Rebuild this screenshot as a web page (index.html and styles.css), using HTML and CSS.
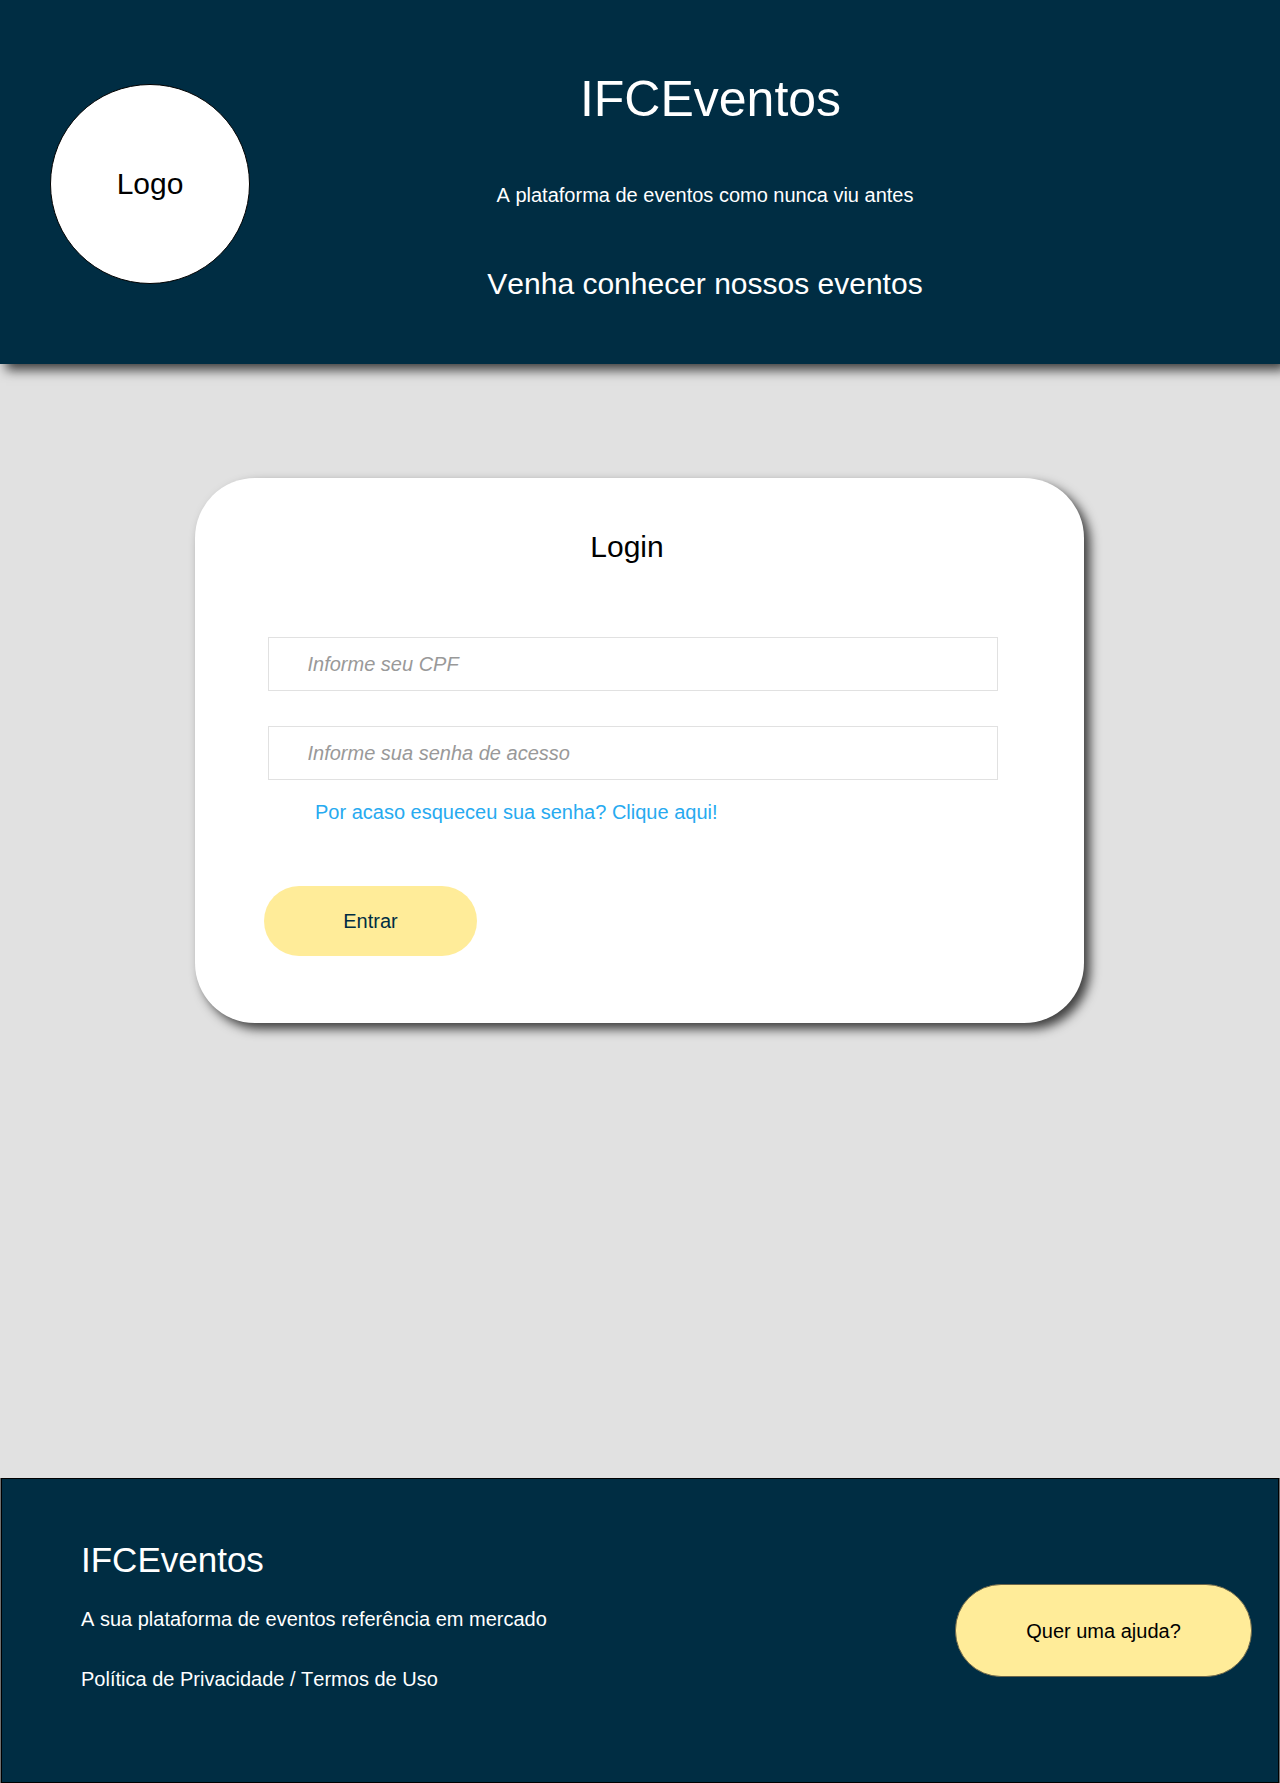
FILE: index.html
```html
<!DOCTYPE html>
<html lang="pt-BR">
<head>
  <meta charset="utf-8">
  <title>IFCEventos - Login</title>
  <link rel="stylesheet" href="styles.css">
</head>
<body>
  <header class="header">
    <div class="logo">Logo</div>
    <div class="intro">
      <h1 class="title">IFCEventos</h1>
      <p class="tagline">A plataforma de eventos como nunca viu antes</p>
      <p class="invite">Venha conhecer nossos eventos</p>
    </div>
  </header>
  <main class="main">
    <form class="card">
      <h2 class="card-title">Login</h2>
      <input class="field" type="text" placeholder="Informe seu CPF">
      <input class="field" type="text" placeholder="Informe sua senha de acesso">
      <a class="forgot" href="#">Por acaso esqueceu sua senha? Clique aqui!</a>
      <button class="submit" type="button">Entrar</button>
    </form>
  </main>
  <footer class="footer">
    <div class="about">
      <h2 class="brand">IFCEventos</h2>
      <p class="slogan">A sua plataforma de eventos referência em mercado</p>
      <p class="legal">Política de Privacidade / Termos de Uso</p>
    </div>
    <button class="help" type="button">Quer uma ajuda?</button>
  </footer>
</body>
</html>
```

FILE: styles.css
```css
* {
  box-sizing: border-box;
  margin: 0;
}

body {
  display: flex;
  flex-direction: column;
  min-height: 1783px;
  background: #e1e1e1;
  font: 20px/22px "Liberation Sans", Arial, sans-serif;
  font-kerning: none;
  color: #000;
  overflow-x: hidden;
}

h1,
h2 {
  font-weight: 400;
}

.header {
  display: flex;
  height: 364px;
  padding: 71px 0 0 50px;
  background: #002d43;
  box-shadow: 6px 6px 11px rgba(0, 0, 0, 0.73);
  color: #fff;
}

.logo {
  display: flex;
  align-items: center;
  justify-content: center;
  width: 200px;
  height: 200px;
  margin-top: 13px;
  padding-bottom: 2px;
  border: 1px solid #000;
  border-radius: 50%;
  background: #fff;
  color: #000;
  font-size: 30px;
  line-height: 33px;
}

.intro {
  width: 436px;
  margin-left: 237px;
  text-align: center;
  white-space: nowrap;
}

.title {
  padding-left: 11px;
  font-size: 50px;
  line-height: 56px;
}

.tagline {
  margin-top: 57px;
}

.invite {
  margin-top: 61px;
  font-size: 30px;
  line-height: 33px;
}

.main {
  height: 1114px;
  padding: 114px 0 0 195px;
}

.card {
  display: flex;
  flex-direction: column;
  align-items: flex-start;
  width: 889px;
  height: 545px;
  padding: 52px 0 0 69px;
  border-radius: 60px;
  background: #fff;
  box-shadow: 6px 6px 11px rgba(0, 0, 0, 0.73);
}

.card-title {
  width: 726px;
  margin-bottom: 74px;
  font-size: 30px;
  line-height: 33px;
  text-align: center;
}

.field {
  width: 730px;
  height: 54px;
  margin: 0 0 35px 4px;
  padding: 0 38.5px;
  border: 1px solid #e1e1e1;
  background: #fff;
  font: italic 20px/22px "Liberation Sans", Arial, sans-serif;
  font-kerning: none;
}

.field::placeholder {
  color: #999;
}

.forgot {
  margin: -14px 0 63px 51px;
  color: #27aaf0;
  text-decoration: none;
}

.submit {
  width: 213px;
  height: 70px;
  padding: 0;
  border: 0;
  border-radius: 35px;
  background: #ffec99;
  color: #002d43;
  font: inherit;
}

.footer {
  display: flex;
  justify-content: space-between;
  height: 305px;
  margin: 0 1px;
  padding: 61px 26px 0 79px;
  border: 1px solid #000;
  background: #002d43;
  box-shadow: -1px 0 #707070, 1px 0 #707070;
  color: #fff;
}

.brand {
  font-size: 35px;
  line-height: 39px;
}

.slogan {
  margin-top: 29px;
}

.legal {
  margin-top: 38px;
}

.help {
  width: 297px;
  height: 93px;
  margin-top: 44px;
  padding: 0;
  border: 1px solid #6d674a;
  border-radius: 46px;
  background: #ffec99;
  color: #000;
  font: inherit;
}
```
